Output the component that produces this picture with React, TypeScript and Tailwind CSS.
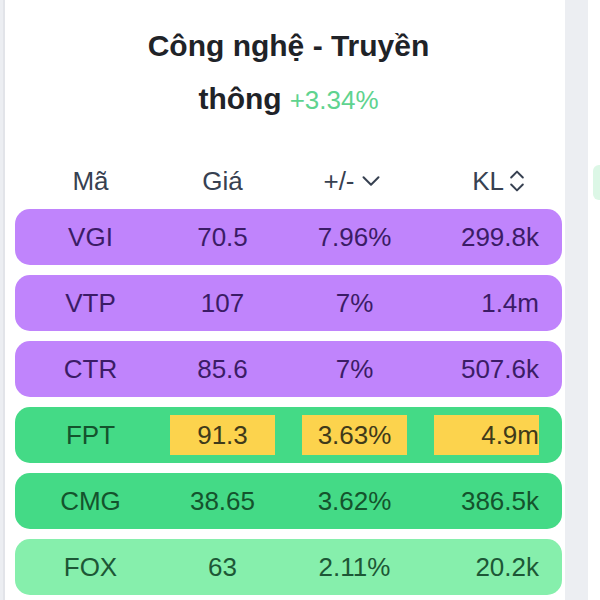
import { ChevronDown, ChevronsUpDown } from 'lucide-react';

type Tone = 'purple' | 'green' | 'light';

const tones: Record<Tone, string> = {
  purple: 'bg-[#c084fc] text-[#3b1c66]',
  green: 'bg-[#44da86] text-[#14532d]',
  light: 'bg-[#86efac] text-[#1d5736]',
};

const rows: { code: string; price: string; change: string; vol: string; tone: Tone; hot?: boolean }[] = [
  { code: 'VGI', price: '70.5', change: '7.96%', vol: '299.8k', tone: 'purple' },
  { code: 'VTP', price: '107', change: '7%', vol: '1.4m', tone: 'purple' },
  { code: 'CTR', price: '85.6', change: '7%', vol: '507.6k', tone: 'purple' },
  { code: 'FPT', price: '91.3', change: '3.63%', vol: '4.9m', tone: 'green', hot: true },
  { code: 'CMG', price: '38.65', change: '3.62%', vol: '386.5k', tone: 'green' },
  { code: 'FOX', price: '63', change: '2.11%', vol: '20.2k', tone: 'light' },
];

function Cell({ children, hot, end }: { children: React.ReactNode; hot?: boolean; end?: boolean }) {
  return (
    <div
      className={`flex h-[40px] items-center ${end ? 'justify-end' : 'justify-center'} ${
        hot ? 'bg-[#fcd34d] text-[#3f3a1a]' : ''
      }`}
    >
      {children}
    </div>
  );
}

export default function App() {
  return (
    <div className="flex h-[600px] w-[600px] overflow-hidden bg-[#eceef2] font-['Liberation_Sans',Arial,sans-serif]">
      <div className="ml-[3px] flex w-[562px] flex-col border-l-2 border-[#e2e4e9] bg-white pl-[10px] pr-[3px]">
        <div className="pt-[19px] text-center text-[30px] font-bold leading-[53px] text-[#1f2328]">
          <div>Công nghệ - Truyền</div>
          <div>
            thông
            <span className="ml-[8px] text-[26px] font-normal text-[#5fd38f]">+3.34%</span>
          </div>
        </div>

        <div className="mt-[34px] grid h-[40px] grid-cols-4 items-center gap-x-[27px] px-[23px] text-[26px] text-[#374151]">
          <div className="text-center">Mã</div>
          <div className="text-center">Giá</div>
          <div className="flex items-center justify-center">
            <span>+/-</span>
            <ChevronDown className="ml-[1px] h-[30px] w-[30px]" strokeWidth={1.6} />
          </div>
          <div className="flex items-center justify-end pr-[8px]">
            <span>KL</span>
            <ChevronsUpDown className="-ml-[1px] h-[28px] w-[28px]" strokeWidth={1.7} />
          </div>
        </div>

        <div className="mt-[8px] flex flex-col gap-[10px]">
          {rows.map((r) => (
            <div
              key={r.code}
              className={`grid h-[56px] grid-cols-4 items-center gap-x-[27px] rounded-[15px] px-[23px] text-[26px] ${tones[r.tone]}`}
            >
              <Cell>{r.code}</Cell>
              <Cell hot={r.hot}>{r.price}</Cell>
              <Cell hot={r.hot}>{r.change}</Cell>
              <Cell hot={r.hot} end>
                {r.vol}
              </Cell>
            </div>
          ))}
        </div>
      </div>

      <div className="ml-[23px] flex-1 bg-white pl-[5px] pt-[165px]">
        <div className="h-[35px] rounded-l-[6px] bg-[#dcf7e6]" />
      </div>
    </div>
  );
}
